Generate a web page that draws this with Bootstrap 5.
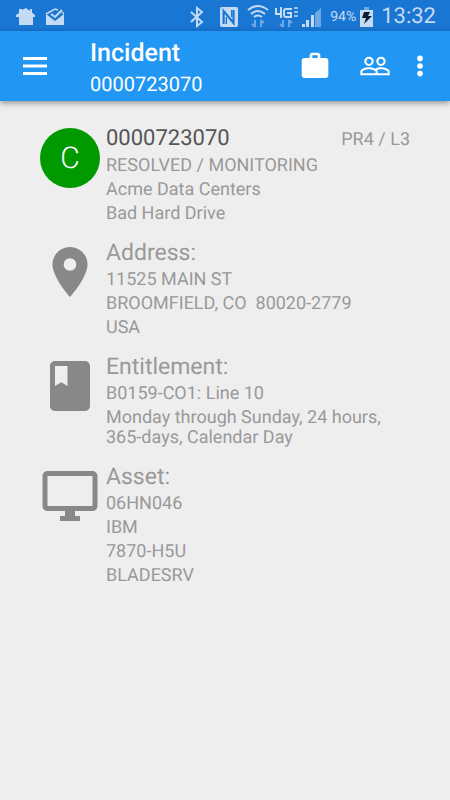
<!DOCTYPE html>
<html lang="en">
<head>
<meta charset="utf-8">
<meta name="viewport" content="width=device-width, initial-scale=1">
<title>Incident 0000723070</title>
<link href="https://cdn.jsdelivr.net/npm/bootstrap@5.3.0/dist/css/bootstrap.min.css" rel="stylesheet">
<style>
body { font-family: Roboto, sans-serif; background: #eee; color: #999; text-rendering: geometricPrecision; }
svg { display: block; flex: none; }
.status-bar { background: #1976d2; color: #c5daf3; height: 31px; padding: 2px 14px 0 16px; }
.status-bar .battery-level { font-size: 14px; line-height: 20px; }
.status-bar .clock { font-size: 22px; line-height: 28px; }
.app-bar { background: #2196f3; color: #fff; height: 70px; padding: 0 14px 0 17px; box-shadow: 0 2px 6px rgba(0, 0, 0, .4); }
.app-bar .btn { color: #fff; }
.app-heading { padding: 6px 0 0 37px; }
.app-title { font-size: 25px; line-height: 30px; font-weight: 500; }
.app-subtitle { font-size: 20px; line-height: 30px; }
.app-actions { gap: 28px; }
.app-actions .btn:last-child { margin-left: -15px; }
.incident { padding: 24px 40px; }
.entry { gap: 6px; margin-bottom: 15px; }
.entry-icon { width: 60px; padding-top: 3px; color: #888; }
.avatar-disc { width: 60px; height: 60px; background: #090; color: #fff; font-size: 30px; font-weight: 300; }
.entry-title { font-size: 23px; line-height: 28px; font-weight: 400; margin: 0 0 3px; }
.entry-number { font-size: 22px; color: #555; }
.entry-line { font-size: 18px; line-height: 20px; margin-bottom: 4px; white-space: pre-wrap; }
.entry-line:last-child { margin-bottom: 0; }
</style>
<script src="https://cdn.jsdelivr.net/npm/bootstrap@5.3.0/dist/js/bootstrap.bundle.min.js" defer></script>
</head>
<body>
<div class="status-bar d-flex align-items-center justify-content-between">
  <div class="d-flex gap-2">
    <svg width="20" height="18" viewBox="0 0 20 18" fill="currentColor"><path d="M10 0l4 3V1h2v3.500L19 7v2h-2v8H3V9H0V7l3-2V1h3v1z"/></svg>
    <svg width="22" height="18" viewBox="0 0 20 18" fill="none"><path d="M1 6v11h18V6l-9 7z" fill="currentColor"/><path d="M1 6l9-5 3 1M17 4l2 2" stroke="currentColor" stroke-width="1.500"/><path d="M6 6l4 3 7-7" stroke="currentColor" stroke-width="2"/></svg>
  </div>
  <div class="d-flex align-items-center">
    <svg width="14" height="22" viewBox="0 0 14 22" fill="none" stroke="currentColor" stroke-width="2"><path d="M1 6l11 10-5 4V2l5 4L1 16"/></svg>
    <svg class="ms-3" width="18" height="20" viewBox="0 0 20 20" preserveAspectRatio="none"><rect width="20" height="20" rx="2" fill="currentColor"/><path d="M4 17V4l11 12V3" fill="none" stroke="#1976d2" stroke-width="2.400"/><path d="M7 17V10M13 3v7" stroke="#1976d2" stroke-width="1.500"/></svg>
    <svg class="ms-2" width="24" height="24" viewBox="0 0 24 24" fill="none" stroke="currentColor" stroke-width="2"><path d="M2 5q10-8 20 0M5 9q7-6 14 0M8 12q4-3 8 0"/><path d="M9 15v7m-3-3l3 3M15 22v-7m3 3l-3-3" stroke="#6fa9e5"/></svg>
    <svg class="ms-1" width="24" height="24" viewBox="0 0 24 24" fill="none" stroke="currentColor" stroke-width="2"><path d="M2 3v6h6M7 2v11M18 4h-6q-2 0-2 2v4q0 2 2 2h5V8h-4"/><path d="M20 3h4M20 7h4M20 11h4" stroke-width="1.500"/><path d="M9 15v7m-3-3l3 3M15 22v-7m3 3l-3-3" stroke="#6fa9e5"/></svg>
    <svg class="ms-1" width="20" height="20" viewBox="0 0 20 20" fill="currentColor"><path d="M0 17h3v3H0zM4 13h3v7H4zM9 8h3v12H9z"/><path d="M13 6l6-5v19h-6z" fill="#6fa9e5"/></svg>
    <span class="battery-level ms-2">94%</span>
    <svg class="ms-1" width="13" height="20" viewBox="0 0 13 20"><path d="M0 3h13v17H0z" fill="currentColor"/><path d="M4 0h5v3H4z" fill="#6fa9e5"/><path d="M4 5h6L8 9h4l-8 8 2-6H2z" fill="#0b1d33"/></svg>
    <span class="clock ms-2">13:32</span>
  </div>
</div>
<header class="app-bar d-flex align-items-center">
  <button class="btn p-0 border-0" type="button" aria-label="Menu">
    <svg width="36" height="36" viewBox="0 0 24 24" fill="currentColor"><path d="M4 18h16v-2H4v2zm0-5h16v-2H4v2zm0-7v2h16V6H4z"/></svg>
  </button>
  <div class="app-heading flex-grow-1">
    <h1 class="app-title m-0">Incident</h1>
    <div class="app-subtitle">0000723070</div>
  </div>
  <div class="app-actions d-flex align-items-center">
    <button class="btn p-0 border-0" type="button" aria-label="Work">
      <svg width="32" height="32" viewBox="0 0 24 24" fill="currentColor"><path d="M20 6h-4V4c0-1.110-.890-2-2-2h-4c-1.110 0-2 .890-2 2v2H4c-1.110 0-1.990.890-1.990 2L2 19c0 1.110.890 2 2 2h16c1.110 0 2-.890 2-2V8c0-1.110-.890-2-2-2zm-6 0h-4V4h4v2z"/></svg>
    </button>
    <button class="btn p-0 border-0" type="button" aria-label="People">
      <svg width="32" height="32" viewBox="0 0 24 24" fill="currentColor"><path d="M16.500 13c-1.200 0-3.070.340-4.500 1-1.430-.670-3.300-1-4.500-1C5.330 13 1 14.080 1 16.250V19h22v-2.750c0-2.170-4.330-3.250-6.500-3.250zm-4 4.500h-10v-1.250c0-.540 2.560-1.750 5-1.750s5 1.210 5 1.750v1.250zm9 0H14v-1.250c0-.460-.200-.860-.520-1.220.880-.300 1.960-.530 3.020-.530 2.440 0 5 1.210 5 1.750v1.250zM7.500 12c1.930 0 3.500-1.570 3.500-3.500S9.430 5 7.500 5 4 6.570 4 8.500 5.570 12 7.500 12zm0-5.500c1.100 0 2 .900 2 2s-.900 2-2 2-2-.900-2-2 .900-2 2-2zm9 5.500c1.930 0 3.500-1.570 3.500-3.500S18.430 5 16.500 5 13 6.570 13 8.500s1.570 3.500 3.500 3.500zm0-5.500c1.100 0 2 .900 2 2s-.900 2-2 2-2-.900-2-2 .900-2 2-2z"/></svg>
    </button>
    <button class="btn p-0 border-0" type="button" aria-label="More options">
      <svg width="32" height="32" viewBox="0 0 24 24" fill="currentColor"><circle cx="12" cy="6.300" r="2.100"/><circle cx="12" cy="12" r="2.100"/><circle cx="12" cy="17.700" r="2.100"/></svg>
    </button>
  </div>
</header>
<main class="incident">
  <section class="entry d-flex">
    <div class="entry-icon flex-shrink-0"><div class="avatar-disc rounded-circle d-flex align-items-center justify-content-center">C</div></div>
    <div class="flex-grow-1">
      <div class="d-flex justify-content-between align-items-baseline">
        <h2 class="entry-title entry-number">0000723070</h2>
        <div class="entry-line mb-0">PR4 / L3</div>
      </div>
      <div class="entry-line">RESOLVED / MONITORING</div>
      <div class="entry-line">Acme Data Centers</div>
      <div class="entry-line">Bad Hard Drive</div>
    </div>
  </section>
  <section class="entry d-flex">
    <div class="entry-icon flex-shrink-0"><svg width="60" height="60" viewBox="0 0 24 24" fill="currentColor"><path d="M12 2C8.130 2 5 5.130 5 9c0 5.250 7 13 7 13s7-7.750 7-13c0-3.870-3.130-7-7-7zm0 9.500c-1.380 0-2.500-1.120-2.500-2.500s1.120-2.500 2.500-2.500 2.500 1.120 2.500 2.500-1.120 2.500-2.500 2.500z"/></svg></div>
    <div class="flex-grow-1">
      <h2 class="entry-title">Address:</h2>
      <div class="entry-line">11525 MAIN ST</div>
      <div class="entry-line">BROOMFIELD, CO  80020-2779</div>
      <div class="entry-line">USA</div>
    </div>
  </section>
  <section class="entry d-flex">
    <div class="entry-icon flex-shrink-0"><svg width="60" height="60" viewBox="0 0 24 24" fill="currentColor"><path d="M18 2H6c-1.100 0-2 .900-2 2v16c0 1.100.900 2 2 2h12c1.100 0 2-.900 2-2V4c0-1.100-.900-2-2-2zM6 4h5v8l-2.500-1.500L6 12V4z"/></svg></div>
    <div class="flex-grow-1">
      <h2 class="entry-title">Entitlement:</h2>
      <div class="entry-line">B0159-CO1: Line 10</div>
      <div class="entry-line">Monday through Sunday, 24 hours, <span class="text-nowrap">365-days</span>, Calendar Day</div>
    </div>
  </section>
  <section class="entry d-flex">
    <div class="entry-icon flex-shrink-0"><svg width="60" height="60" viewBox="0 0 24 24" fill="currentColor"><path d="M21 2H3c-1.100 0-2 .900-2 2v12c0 1.100.900 2 2 2h7v2H8v2h8v-2h-2v-2h7c1.100 0 2-.900 2-2V4c0-1.100-.900-2-2-2zm0 14H3V4h18v12z"/></svg></div>
    <div class="flex-grow-1">
      <h2 class="entry-title">Asset:</h2>
      <div class="entry-line">06HN046</div>
      <div class="entry-line">IBM</div>
      <div class="entry-line">7870-H5U</div>
      <div class="entry-line">BLADESRV</div>
    </div>
  </section>
</main>
</body>
</html>
